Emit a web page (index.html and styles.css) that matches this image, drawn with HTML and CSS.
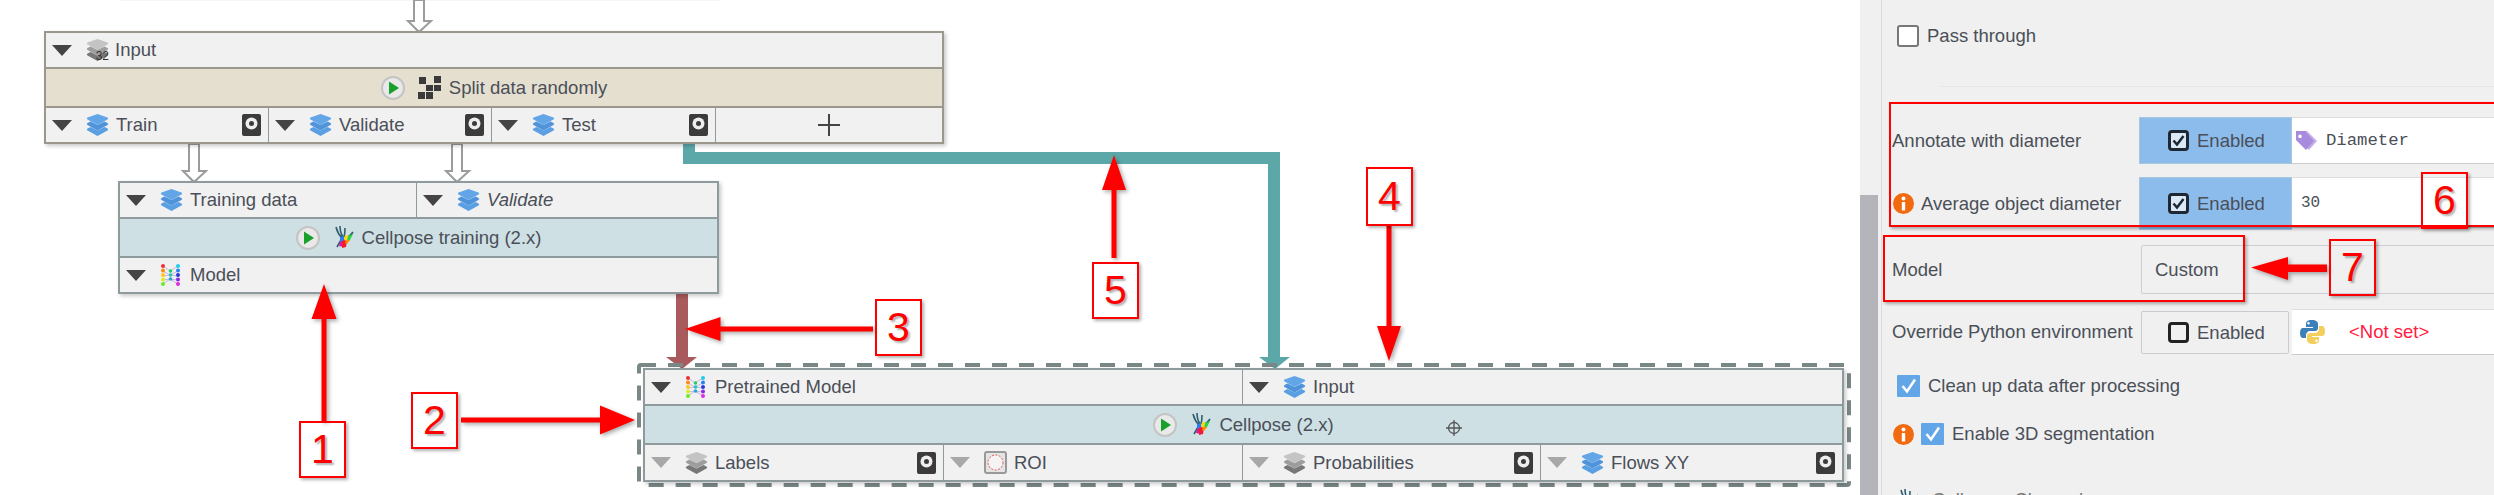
FILE: index.html
```html
<!doctype html>
<html lang="en">
  <head>
    <meta charset="UTF-8" />
    <title>Cellpose pipeline</title>
    <link rel="stylesheet" href="styles.css">
  </head>
  <body>
    <svg class="defs" width="0" height="0">
      <symbol id="i-layers" viewBox="0 0 23 22">
        <path fill="#5b9fe3" d="M11.500 22 1.500 16.500q-1.500-1 0-2l3-1.500 7 3.500 7-3.500 3 1.500q1.500 1 0 2z" />
        <path fill="#4f94da" d="M11.500 16.500 1.500 11q-1.500-1 0-2l3-1.500 7 3.500 7-3.500 3 1.500q1.500 1 0 2z" />
        <path fill="#63a6e8" d="M11.500 11 1.500 5.500q-1.500-1 0-2L11.500 0l10 3.500q1.500 1 0 2z" />
      </symbol>
      <symbol id="i-layers-gray" viewBox="0 0 23 22">
        <path fill="#777" d="M11.500 22 1.500 16.500q-1.500-1 0-2l3-1.500 7 3.500 7-3.500 3 1.500q1.500 1 0 2z" />
        <path fill="#9d9d9d" d="M11.500 16.500 1.500 11q-1.500-1 0-2l3-1.500 7 3.500 7-3.500 3 1.500q1.500 1 0 2z" />
        <path fill="#c4c4c4" d="M11.500 11 1.500 5.500q-1.500-1 0-2L11.500 0l10 3.500q1.500 1 0 2z" />
      </symbol>
      <symbol id="i-save" viewBox="0 0 19 22">
        <rect width="19" height="22" rx="2" fill="#3b3b3b" />
        <circle cx="9.500" cy="9.500" r="6" fill="#eee" />
        <circle cx="9.500" cy="9.500" r="2.500" fill="#3b3b3b" />
      </symbol>
      <symbol id="i-play" viewBox="0 0 24 24">
        <circle cx="12" cy="12" r="11" fill="#e9e9e9" stroke="#c4c4c4" stroke-width="2" />
        <path fill="#17a02a" d="M8 5.500 18 12 8 18.500z" />
      </symbol>
      <symbol id="i-cellpose" viewBox="0 0 22 23">
        <path fill="none" stroke="#2f5f70" stroke-width="1.600" d="M3 1c1 4 2 7 6 11M7 0c0 4 1 8 3 11M12 2c0 3 0 6-1 9M20 6c-2 3-4 5-7 6M4 21l4-7" />
        <path fill="#e6149a" d="M8 12l5 1-2 8-5-1z" />
        <path fill="#f01c2c" d="M9 15l5-1-1 7-4 1z" />
        <path fill="#ffd60a" d="M12 9l5 1-3 5-3-1z" />
        <path fill="#2ad14a" d="M15 10l5-2-3 6-3 2z" />
        <path fill="#2a7cf0" d="M7 11l4-1v4l-4 2z" />
        <path fill="#ff8a00" d="M13 14l4 0-3 4-2-1z" />
      </symbol>
      <symbol id="i-model" viewBox="0 0 21 22">
        <path fill="none" stroke="#c9b4e6" stroke-width="1" d="M3 2l7 5 8-5M3 7l7 4 8-4M3 12l7-1 8 1M3 16l7-1 8 1M3 20l7-5 8 5" />
        <circle cx="3" cy="2" r="2" fill="#f03030" />
        <circle cx="3" cy="6.500" r="2" fill="#ff8a10" />
        <circle cx="3" cy="11" r="2" fill="#ffc81e" />
        <circle cx="3" cy="15.500" r="2" fill="#d8ee20" />
        <circle cx="3" cy="20" r="2" fill="#66ee22" />
        <circle cx="10.500" cy="7" r="1.800" fill="#22cc66" />
        <circle cx="10.500" cy="11" r="1.800" fill="#22c8b4" />
        <circle cx="10.500" cy="15" r="1.800" fill="#2aa4d8" />
        <circle cx="18" cy="2" r="2" fill="#22ccee" />
        <circle cx="18" cy="6.500" r="2" fill="#2a80f0" />
        <circle cx="18" cy="11" r="2" fill="#2a3ad8" />
        <circle cx="18" cy="15.500" r="2" fill="#8a2ae0" />
        <circle cx="18" cy="20" r="2" fill="#e02ae0" />
      </symbol>
      <symbol id="i-info" viewBox="0 0 21 21">
        <circle cx="10.500" cy="10.500" r="10.500" fill="#f26a0f" />
        <circle cx="10.500" cy="5.500" r="2" fill="#fff" />
        <rect x="8.800" y="9" width="3.400" height="8.500" fill="#fff" />
      </symbol>
      <symbol id="i-check-dark" viewBox="0 0 21 21">
        <rect x="1.500" y="1.500" width="18" height="18" rx="2.500" fill="#dbe9f7" stroke="#1f2733" stroke-width="3" />
        <path fill="none" stroke="#1f2733" stroke-width="2.500" d="M5.500 10.500 9 14.500l6.500-8.500" />
      </symbol>
      <symbol id="i-check-off" viewBox="0 0 21 21">
        <rect x="1.500" y="1.500" width="18" height="18" rx="2.500" fill="#f0f0f0" stroke="#222" stroke-width="3" />
      </symbol>
      <symbol id="i-check-blue" viewBox="0 0 23 22">
        <rect width="23" height="22" rx="1" fill="#63a6e8" />
        <path fill="none" stroke="#fff" stroke-width="2.500" d="M5.500 11 10 16.500 18 4.500" />
      </symbol>
    </svg>

    <div class="window">
      <div class="canvas">
        <div class="stub"></div>

        <svg class="edges" width="1860" height="495">
          <path class="edge-hollow" d="M414 0h10v21h7l-12 11-11-11h6z" />
          <path class="edge-hollow" d="M189 144h10v27h7l-12 11-11-11h6z" />
          <path class="edge-hollow" d="M452 144h10v27h7l-12 11-11-11h6z" />
          <path class="edge-teal" d="M689 143v15h585v205" />
          <path class="head-teal" d="M1259 357h31l-15 12z" />
          <path class="edge-brown" d="M682 293v70" />
          <path class="head-brown" d="M666 357h31l-15 12z" />
          <rect class="selection" x="639" y="365" width="1210" height="120" rx="2" />
        </svg>

        <div class="node node-split">
          <div class="slots">
            <div class="slot">
              <span class="chev"></span>
              <span class="ico ico-stack">
                <svg width="23" height="22"><use href="#i-layers-gray" /></svg>
                <span class="ico-count">32</span>
              </span>
              <span>Input</span>
            </div>
          </div>
          <div class="band band-sand">
            <svg class="play" width="24" height="24"><use href="#i-play" /></svg>
            <svg class="ico" width="24" height="23" viewBox="0 0 24 23">
              <path fill="#3a3a3a" d="M1 1h7v7H1zM16 0h7v7h-7zM8 9h7v6H8zM16 9h7v6h-7zM8 16h7v7H8zM0 16h7v7H0z" />
            </svg>
            <span>Split data randomly</span>
          </div>
          <div class="slots slots-split">
            <div class="slot">
              <span class="chev"></span>
              <svg class="ico" width="23" height="22"><use href="#i-layers" /></svg>
              <span>Train</span>
              <svg class="save" width="19" height="22"><use href="#i-save" /></svg>
            </div>
            <div class="slot">
              <span class="chev"></span>
              <svg class="ico" width="23" height="22"><use href="#i-layers" /></svg>
              <span>Validate</span>
              <svg class="save" width="19" height="22"><use href="#i-save" /></svg>
            </div>
            <div class="slot">
              <span class="chev"></span>
              <svg class="ico" width="23" height="22"><use href="#i-layers" /></svg>
              <span>Test</span>
              <svg class="save" width="19" height="22"><use href="#i-save" /></svg>
            </div>
            <div class="slot slot-add">
              <svg width="22" height="22" viewBox="0 0 22 22"><path fill="none" stroke="#444" stroke-width="2" d="M11 0v22M0 11h22" /></svg>
            </div>
          </div>
        </div>

        <div class="node node-train">
          <div class="slots slots-train">
            <div class="slot">
              <span class="chev"></span>
              <svg class="ico" width="23" height="22"><use href="#i-layers" /></svg>
              <span>Training data</span>
            </div>
            <div class="slot">
              <span class="chev"></span>
              <svg class="ico" width="23" height="22"><use href="#i-layers" /></svg>
              <em>Validate</em>
            </div>
          </div>
          <div class="band band-blue">
            <svg class="play" width="24" height="24"><use href="#i-play" /></svg>
            <svg class="ico" width="22" height="23"><use href="#i-cellpose" /></svg>
            <span>Cellpose training (2.x)</span>
          </div>
          <div class="slots">
            <div class="slot">
              <span class="chev"></span>
              <svg class="ico ico-model" width="21" height="22"><use href="#i-model" /></svg>
              <span>Model</span>
            </div>
          </div>
        </div>

        <div class="node node-cellpose">
          <div class="slots slots-cellpose-in">
            <div class="slot">
              <span class="chev"></span>
              <svg class="ico ico-model" width="21" height="22"><use href="#i-model" /></svg>
              <span>Pretrained Model</span>
            </div>
            <div class="slot">
              <span class="chev"></span>
              <svg class="ico" width="23" height="22"><use href="#i-layers" /></svg>
              <span>Input</span>
            </div>
          </div>
          <div class="band band-blue">
            <svg class="play" width="24" height="24"><use href="#i-play" /></svg>
            <svg class="ico" width="22" height="23"><use href="#i-cellpose" /></svg>
            <span>Cellpose (2.x)</span>
          </div>
          <div class="slots slots-cellpose-out">
            <div class="slot">
              <span class="chev chev-off"></span>
              <svg class="ico" width="23" height="22"><use href="#i-layers-gray" /></svg>
              <span>Labels</span>
              <svg class="save" width="19" height="22"><use href="#i-save" /></svg>
            </div>
            <div class="slot">
              <span class="chev chev-off"></span>
              <svg class="ico" width="23" height="23" viewBox="0 0 23 23">
                <rect x="1" y="1" width="21" height="21" rx="2" fill="#e4e4e4" stroke="#999" stroke-width="2" />
                <circle cx="11.500" cy="11.500" r="7.500" fill="#f4f4f4" stroke="#e25555" stroke-width="1" stroke-dasharray="2 1.500" />
              </svg>
              <span>ROI</span>
            </div>
            <div class="slot">
              <span class="chev chev-off"></span>
              <svg class="ico" width="23" height="22"><use href="#i-layers-gray" /></svg>
              <span>Probabilities</span>
              <svg class="save" width="19" height="22"><use href="#i-save" /></svg>
            </div>
            <div class="slot">
              <span class="chev chev-off"></span>
              <svg class="ico" width="23" height="22"><use href="#i-layers" /></svg>
              <span>Flows XY</span>
              <svg class="save" width="19" height="22"><use href="#i-save" /></svg>
            </div>
          </div>
        </div>

        <svg class="crosshair" width="16" height="16" viewBox="0 0 16 16">
          <circle cx="8" cy="8" r="5.500" fill="none" stroke="#555" stroke-width="1.300" />
          <path stroke="#555" stroke-width="1.300" d="M8 0v16M0 8h16" />
        </svg>
      </div>

      <div class="scrollbar"><div class="thumb"></div></div>

      <div class="panel">
        <label class="check-row check-pass">
          <span class="box-empty"></span>
          <span>Pass through</span>
        </label>
        <div class="sep"></div>

        <div class="row row-annotate">
          <span class="label">Annotate with diameter</span>
          <span class="toggle toggle-on">
            <svg width="21" height="21"><use href="#i-check-dark" /></svg>
            <span>Enabled</span>
          </span>
          <span class="field">
            <svg class="tag" width="23" height="20" viewBox="0 0 23 20">
              <path fill="#c3aee8" d="M8 0h4l10 10-8 9-2-2z" />
              <path fill="#a88bdc" d="M1 0h9l9 10-8 9-10-10zM5 3.500a1.800 1.800 0 1 0 .01 0z" />
            </svg>
            <span class="mono">Diameter</span>
          </span>
        </div>

        <div class="row row-average">
          <span class="label">
            <svg class="info" width="21" height="21"><use href="#i-info" /></svg>
            <span>Average object diameter</span>
          </span>
          <span class="toggle toggle-on">
            <svg width="21" height="21"><use href="#i-check-dark" /></svg>
            <span>Enabled</span>
          </span>
          <span class="field field-num"><span class="mono-small">30</span></span>
        </div>

        <div class="row row-model">
          <span class="label label-model">Model</span>
          <span class="combo">Custom</span>
        </div>

        <div class="row row-python">
          <span class="label label-python">Override Python environment</span>
          <span class="toggle toggle-off">
            <svg width="21" height="21"><use href="#i-check-off" /></svg>
            <span>Enabled</span>
          </span>
          <span class="field field-python">
            <svg class="python" width="25" height="24" viewBox="0 0 25 24">
              <path fill="#3d7fb8" d="M12 0c-5 0-6 2-6 4v3h7v1H3c-2 0-3 2-3 5s1 5 3 5h3v-3c0-2 2-4 4-4h5c2 0 3-1 3-3V4c0-2-2-4-6-4zM8.500 2a1.300 1.300 0 1 1 0 2.600 1.300 1.300 0 0 1 0-2.600z" />
              <path fill="#f5cf5c" d="M13 24c5 0 6-2 6-4v-3h-7v-1h10c2 0 3-2 3-5s-1-5-3-5h-3v3c0 2-2 4-4 4h-5c-2 0-3 1-3 3v4c0 2 2 4 6 4zm3.500-2a1.300 1.300 0 1 1 0-2.600 1.300 1.300 0 0 1 0 2.600z" />
            </svg>
            <span class="not-set">&lt;Not set&gt;</span>
          </span>
        </div>

        <label class="check-row check-clean">
          <svg width="23" height="22"><use href="#i-check-blue" /></svg>
          <span>Clean up data after processing</span>
        </label>

        <label class="check-row check-3d">
          <svg class="info" width="21" height="21"><use href="#i-info" /></svg>
          <svg width="23" height="22"><use href="#i-check-blue" /></svg>
          <span>Enable 3D segmentation</span>
        </label>

        <div class="section-title">
          <svg width="22" height="23"><use href="#i-cellpose" /></svg>
          <span>Cellpose: Channels</span>
        </div>
      </div>

      <!-- red notes drawn over the screenshot -->
      <svg class="note-arrows" width="2494" height="495">
        <path d="M321.500 421v-102h-10l12.500-35 12.500 35h-10v102z" />
        <path d="M461 417.500h139v-12l35 14.500-35 14.500v-12H461z" />
        <path d="M873 326.500H720.500v-9.500l-35.500 12 35.500 12v-9.500H873z" />
        <path d="M1386.500 226v100h-9.500l12 35 12-35h-9.500V226z" />
        <path d="M1111.500 258v-68h-9.500l12-35 12 35h-9.500v68z" />
        <path d="M2327 264.500h-39V257l-37 10.500 37 12.500v-8h39z" />
      </svg>
      <div class="note note-big"></div>
      <div class="note note-model"></div>
      <div class="note note-digit note-1">1</div>
      <div class="note note-digit note-2">2</div>
      <div class="note note-digit note-3">3</div>
      <div class="note note-digit note-4">4</div>
      <div class="note note-digit note-5">5</div>
      <div class="note note-digit note-6">6</div>
      <div class="note note-digit note-7">7</div>
    </div>
  </body>
</html>
```

FILE: styles.css
```css
html,
body {
  margin: 0;
  padding: 0;
  overflow: hidden;
  background: #fff;
}
body,
.window {
  width: 2494px;
  height: 495px;
}
.defs {
  position: absolute;
}
.window {
  position: relative;
  display: flex;
  overflow: hidden;
  font-family: "Liberation Sans", Arial, sans-serif;
  font-size: 18.500px;
  color: #4a4f58;
}

/* graph canvas */
.canvas {
  position: relative;
  width: 1860px;
  flex: none;
  background: #fff;
}
.stub {
  position: absolute;
  left: 120px;
  top: 0;
  width: 600px;
  height: 1px;
  background: #f6f6f6;
}
.edges {
  position: absolute;
  left: 0;
  top: 0;
}
.edge-hollow {
  fill: #fff;
  stroke: #9c9c9c;
  stroke-width: 2;
}
.edge-teal {
  fill: none;
  stroke: #5ca8a9;
  stroke-width: 12;
}
.head-teal {
  fill: #5ca8a9;
}
.edge-brown {
  fill: none;
  stroke: #a85a5c;
  stroke-width: 12;
}
.head-brown {
  fill: #a85a5c;
}
.selection {
  fill: none;
  stroke: #7a8787;
  stroke-width: 4;
  stroke-dasharray: 15 12;
}
.node {
  position: absolute;
  box-sizing: border-box;
  display: flex;
  flex-direction: column;
  border: 2px solid #8f9a9c;
  background: #f1f1f1;
  box-shadow: 2px 2px 4px rgba(0, 0, 0, 0.22);
}
.node-split {
  left: 44px;
  top: 31px;
  width: 900px;
  height: 113px;
  border-color: #9b978d;
}
.node-train {
  left: 118px;
  top: 181px;
  width: 601px;
  height: 113px;
}
.node-cellpose {
  left: 643px;
  top: 368px;
  width: 1201px;
  height: 114px;
}
.slots {
  display: grid;
  height: 34px;
  flex: none;
}
.slots:first-child {
  height: 34px;
  border-bottom: 2px solid #8f9a9c;
}
.node-split .slots:first-child,
.node-split .band {
  border-color: #9b978d;
}
.slots-split {
  grid-template-columns: 223px 223px 224px 1fr;
}
.slots-train {
  grid-template-columns: 297px 1fr;
}
.slots-cellpose-in {
  grid-template-columns: 598px 1fr;
}
.slots-cellpose-out {
  grid-template-columns: 299px 299px 298px 1fr;
}
.node-cellpose .slots:last-child {
  height: 35px;
}
.slot {
  display: flex;
  align-items: center;
  min-width: 0;
  padding: 0 7px 0 6px;
  border-right: 1px solid #8f9a9c;
}
.slot:last-child {
  border-right: 0;
}
.slot-add {
  justify-content: center;
}
.chev {
  width: 0;
  height: 0;
  flex: none;
  margin-right: 14px;
  border-style: solid;
  border-width: 11px 10px 0;
  border-color: #444 transparent transparent;
}
.chev-off {
  border-top-color: #a8a8a8;
}
.ico {
  flex: none;
  margin-right: 7px;
}
.ico-model {
  margin-right: 9px;
}
.ico-stack {
  position: relative;
  display: block;
  width: 23px;
  height: 22px;
  margin-right: 6px;
}
.ico-count {
  position: absolute;
  right: 0;
  bottom: -1px;
  font-size: 12px;
  line-height: 12px;
  color: #333;
}
.save {
  flex: none;
  margin-left: auto;
}
.band {
  display: flex;
  align-items: center;
  justify-content: center;
  height: 37px;
  flex: none;
  border-bottom: 2px solid #8f9a9c;
}
.band-sand {
  background: #e5dfd0;
}
.band-blue {
  background: #cee0e4;
}
.play {
  flex: none;
  margin-right: 13px;
}
.crosshair {
  position: absolute;
  left: 1446px;
  top: 420px;
}

/* scrollbar between canvas and panel */
.scrollbar {
  box-sizing: border-box;
  width: 22px;
  flex: none;
  background: #f0f0f0;
  border-right: 1px solid #dcdcdc;
}
.thumb {
  width: 18px;
  height: 300px;
  margin-top: 195px;
  background: #b4b5ba;
}

/* parameter panel */
.panel {
  flex: 1;
  min-width: 0;
  padding: 25px 0 0 10px;
  background: #f0f0f0;
}
.check-row {
  display: flex;
  align-items: center;
  height: 22px;
}
.check-pass {
  padding-left: 5px;
}
.box-empty {
  box-sizing: border-box;
  width: 22px;
  height: 22px;
  margin-right: 8px;
  border: 2px solid #777;
  border-radius: 3px;
  background: #fff;
}
.sep {
  height: 1px;
  margin: 39px 0 0 48px;
  background: #e6e6e6;
}
.row {
  display: flex;
  align-items: stretch;
}
.row-annotate {
  height: 47px;
  margin-top: 30px;
}
.row-average {
  height: 53px;
  margin-top: 13px;
}
.row-model {
  height: 49px;
  margin-top: 15px;
}
.row-python {
  height: 46px;
  margin-top: 15px;
}
.label {
  display: flex;
  align-items: center;
  width: 247px;
  flex: none;
}
.label-model,
.label-python {
  width: 249px;
}
.info {
  flex: none;
  margin: 0 7px 0 1px;
}
.toggle {
  display: flex;
  align-items: center;
  box-sizing: border-box;
  flex: none;
  width: 153px;
  padding-left: 28px;
  gap: 8px;
  border: 1px solid #a9c6e0;
}
.toggle-on {
  background: #8cbcec;
}
.toggle-off {
  width: 148px;
  padding-left: 26px;
  margin: 2px 3px 1px 0;
  background: #f0f0f0;
  border: 1px solid #c8ccd0;
  border-radius: 2px;
}
.field {
  display: flex;
  align-items: center;
  flex: 1;
  background: #fff;
  border-bottom: 1px solid #ccc;
  border-top: 1px solid #ddd;
}
.field-num {
  padding-left: 9px;
  margin-bottom: 2px;
}
.field-python {
  padding-left: 8px;
}
.tag {
  margin: 0 8px 0 3px;
}
.mono {
  font-family: "Liberation Mono", monospace;
  font-size: 17.300px;
}
.mono-small {
  font-family: "Liberation Mono", monospace;
  font-size: 16px;
}
.not-set {
  margin-left: 24px;
  color: #ff2040;
}
.combo {
  display: flex;
  align-items: center;
  flex: 1;
  margin-right: -3px;
  padding-left: 13px;
  background: #f0f0f0;
  border: 1px solid #ccd0d4;
  border-radius: 2px;
}
.check-row svg {
  flex: none;
}
.check-clean {
  margin-top: 20px;
  padding-left: 5px;
  gap: 8px;
}
.check-3d {
  margin-top: 26px;
  gap: 8px;
}
.check-3d .info {
  margin: 0 -1px 0 1px;
}
.section-title {
  display: flex;
  align-items: flex-start;
  gap: 12px;
  margin: 44px 0 0 6px;
  color: #777;
}

/* red notes */
.note-arrows {
  position: absolute;
  left: 0;
  top: 0;
  fill: #f00;
  filter: drop-shadow(2px 2px 2px rgba(0, 0, 0, 0.35));
  pointer-events: none;
}
.note {
  position: absolute;
  box-sizing: border-box;
  border: 2px solid #f00;
  box-shadow: 2px 2px 3px rgba(0, 0, 0, 0.3);
}
.note-big {
  left: 1889px;
  top: 102px;
  width: 640px;
  height: 125px;
}
.note-model {
  left: 1883px;
  top: 235px;
  width: 362px;
  height: 67px;
}
.note-digit {
  display: flex;
  align-items: center;
  justify-content: center;
  width: 47px;
  height: 57px;
  font-size: 41px;
  line-height: 1;
  color: #f00;
  text-shadow: 2px 2px 2px rgba(0, 0, 0, 0.3);
}
.note-1 {
  left: 299px;
  top: 421px;
}
.note-2 {
  left: 411px;
  top: 392px;
}
.note-3 {
  left: 875px;
  top: 299px;
}
.note-4 {
  left: 1366px;
  top: 167px;
  height: 59px;
}
.note-5 {
  left: 1092px;
  top: 262px;
}
.note-6 {
  left: 2421px;
  top: 172px;
}
.note-7 {
  left: 2329px;
  top: 239px;
}
```
